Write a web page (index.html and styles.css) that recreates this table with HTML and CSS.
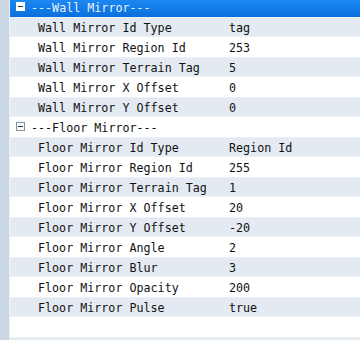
FILE: index.html
```html
<!DOCTYPE html>
<html>
<head>
<meta charset="utf-8">
<link rel="stylesheet" href="styles.css">
</head>
<body>
<div class="frame">
  <div class="gutter"></div>
  <div class="view">
    <div class="list">
      <div class="row group selected"><span class="toggle"></span><span class="gname">---Wall Mirror---</span></div>
      <div class="row alt"><span class="name">Wall Mirror Id Type</span><span class="val">tag</span></div>
      <div class="row"><span class="name">Wall Mirror Region Id</span><span class="val">253</span></div>
      <div class="row alt"><span class="name">Wall Mirror Terrain Tag</span><span class="val">5</span></div>
      <div class="row"><span class="name">Wall Mirror X Offset</span><span class="val">0</span></div>
      <div class="row alt"><span class="name">Wall Mirror Y Offset</span><span class="val">0</span></div>
      <div class="row group"><span class="toggle"></span><span class="gname">---Floor Mirror---</span></div>
      <div class="row alt"><span class="name">Floor Mirror Id Type</span><span class="val">Region Id</span></div>
      <div class="row"><span class="name">Floor Mirror Region Id</span><span class="val">255</span></div>
      <div class="row alt"><span class="name">Floor Mirror Terrain Tag</span><span class="val">1</span></div>
      <div class="row"><span class="name">Floor Mirror X Offset</span><span class="val">20</span></div>
      <div class="row alt"><span class="name">Floor Mirror Y Offset</span><span class="val">-20</span></div>
      <div class="row"><span class="name">Floor Mirror Angle</span><span class="val">2</span></div>
      <div class="row alt"><span class="name">Floor Mirror Blur</span><span class="val">3</span></div>
      <div class="row"><span class="name">Floor Mirror Opacity</span><span class="val">200</span></div>
      <div class="row alt"><span class="name">Floor Mirror Pulse</span><span class="val">true</span></div>
      <div class="row"></div>
      <div class="row alt"></div>
    </div>
  </div>
</div>
</body>
</html>
```
FILE: styles.css
```css
html, body {
  margin: 0;
  padding: 0;
  background: #ffffff;
}
.frame {
  display: flex;
  width: 360px;
  height: 340px;
  overflow: hidden;
  font-family: "DejaVu Sans Mono", "Liberation Mono", monospace;
  font-size: 11.7px;
  color: #111111;
}
.gutter {
  width: 9px;
  flex: none;
  background: #cbd6e4;
  border-right: 1px solid #eef2f7;
}
.view {
  flex: 1;
  overflow: hidden;
}
.list {
  margin-top: -3px;
}
.row {
  display: flex;
  align-items: center;
  height: 20px;
  padding-top: 1px;
  box-sizing: border-box;
  background: #ffffff;
  white-space: nowrap;
}
.row.alt {
  background: #e4eaf1;
  border-top: 1px solid #edf1f6;
  border-bottom: 1px solid #edf1f6;
}
.name {
  width: 191px;
  padding-left: 28px;
  flex: none;
}
.val {
  flex: 1;
}
.group {
  padding-left: 6px;
}
.toggle {
  width: 9px;
  height: 9px;
  box-sizing: border-box;
  border: 1px solid #8593a3;
  background: #f7f9fb;
  position: relative;
  flex: none;
  margin-right: 6px;
  margin-top: -2px;
}
.toggle::after {
  content: "";
  position: absolute;
  left: 1px;
  top: 3px;
  width: 5px;
  height: 1px;
  background: #2b3640;
}
.selected {
  background: linear-gradient(#1f8cf5, #0a6fdc);
  color: #e9f3ff;
}
.selected .toggle {
  border-color: #ffffff;
  background: #ffffff;
}
```
